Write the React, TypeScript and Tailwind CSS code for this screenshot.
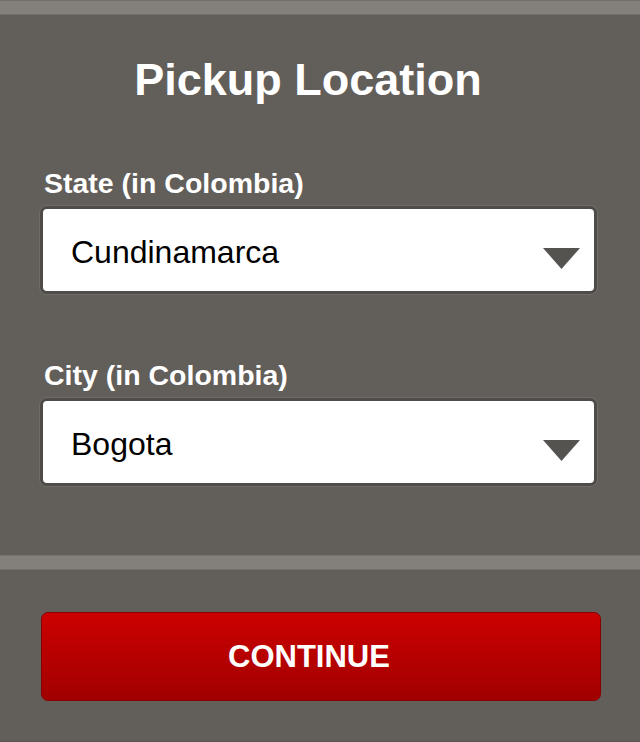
function Caret() {
  return (
    <svg width="37" height="21" viewBox="0 0 37 21" className="mt-[13px] shrink-0">
      <polygon points="0,0 37,0 18.5,21" fill="#555350" />
    </svg>
  );
}

function SelectField({ label, value }: { label: string; value: string }) {
  return (
    <div className="flex flex-col">
      <div className="h-[28px] pl-[44px] text-[28.5px] leading-[28px] font-bold text-white">{label}</div>
      <div className="ml-[40px] mr-[43px] mt-[9px] h-[88px] rounded-[7px] border-[3px] border-[#4e4b49] bg-white shadow-[0_0_0_1px_#6f6b68]">
        <div className="flex h-full items-center justify-between pl-[28px] pr-[14px] pt-[4px]">
          <span className="text-[32px] leading-[32px] text-black">{value}</span>
          <Caret />
        </div>
      </div>
    </div>
  );
}

export default function App() {
  return (
    <div
      className="flex h-[742px] w-[640px] flex-col bg-[#625e5a] border-b border-[#555250]"
      style={{ fontFamily: '"Liberation Sans", Arial, sans-serif' }}
    >
      <div className="h-[15px] border-y border-[#716d6a] bg-[#83807c]" />

      <h1 className="mt-[43px] h-[44px] pr-[24px] text-center text-[45px] leading-[44px] font-bold text-white">
        Pickup Location
      </h1>

      <div className="mt-[67px]">
        <SelectField label="State (in Colombia)" value="Cundinamarca" />
      </div>
      <div className="mt-[67px]">
        <SelectField label="City (in Colombia)" value="Bogota" />
      </div>

      <div className="mt-[69px] h-[15px] border-y border-[#75716e] bg-[#83807c]" />

      <div className="mt-[42px] pl-[41px] pr-[39px]">
        <button className="flex h-[89px] w-full items-center justify-center rounded-[7px] border border-[#8a0000] bg-gradient-to-b from-[#cc0000] to-[#a10000] pr-[24px] text-[31px] leading-[30px] font-bold text-white">
          CONTINUE
        </button>
      </div>
    </div>
  );
}
